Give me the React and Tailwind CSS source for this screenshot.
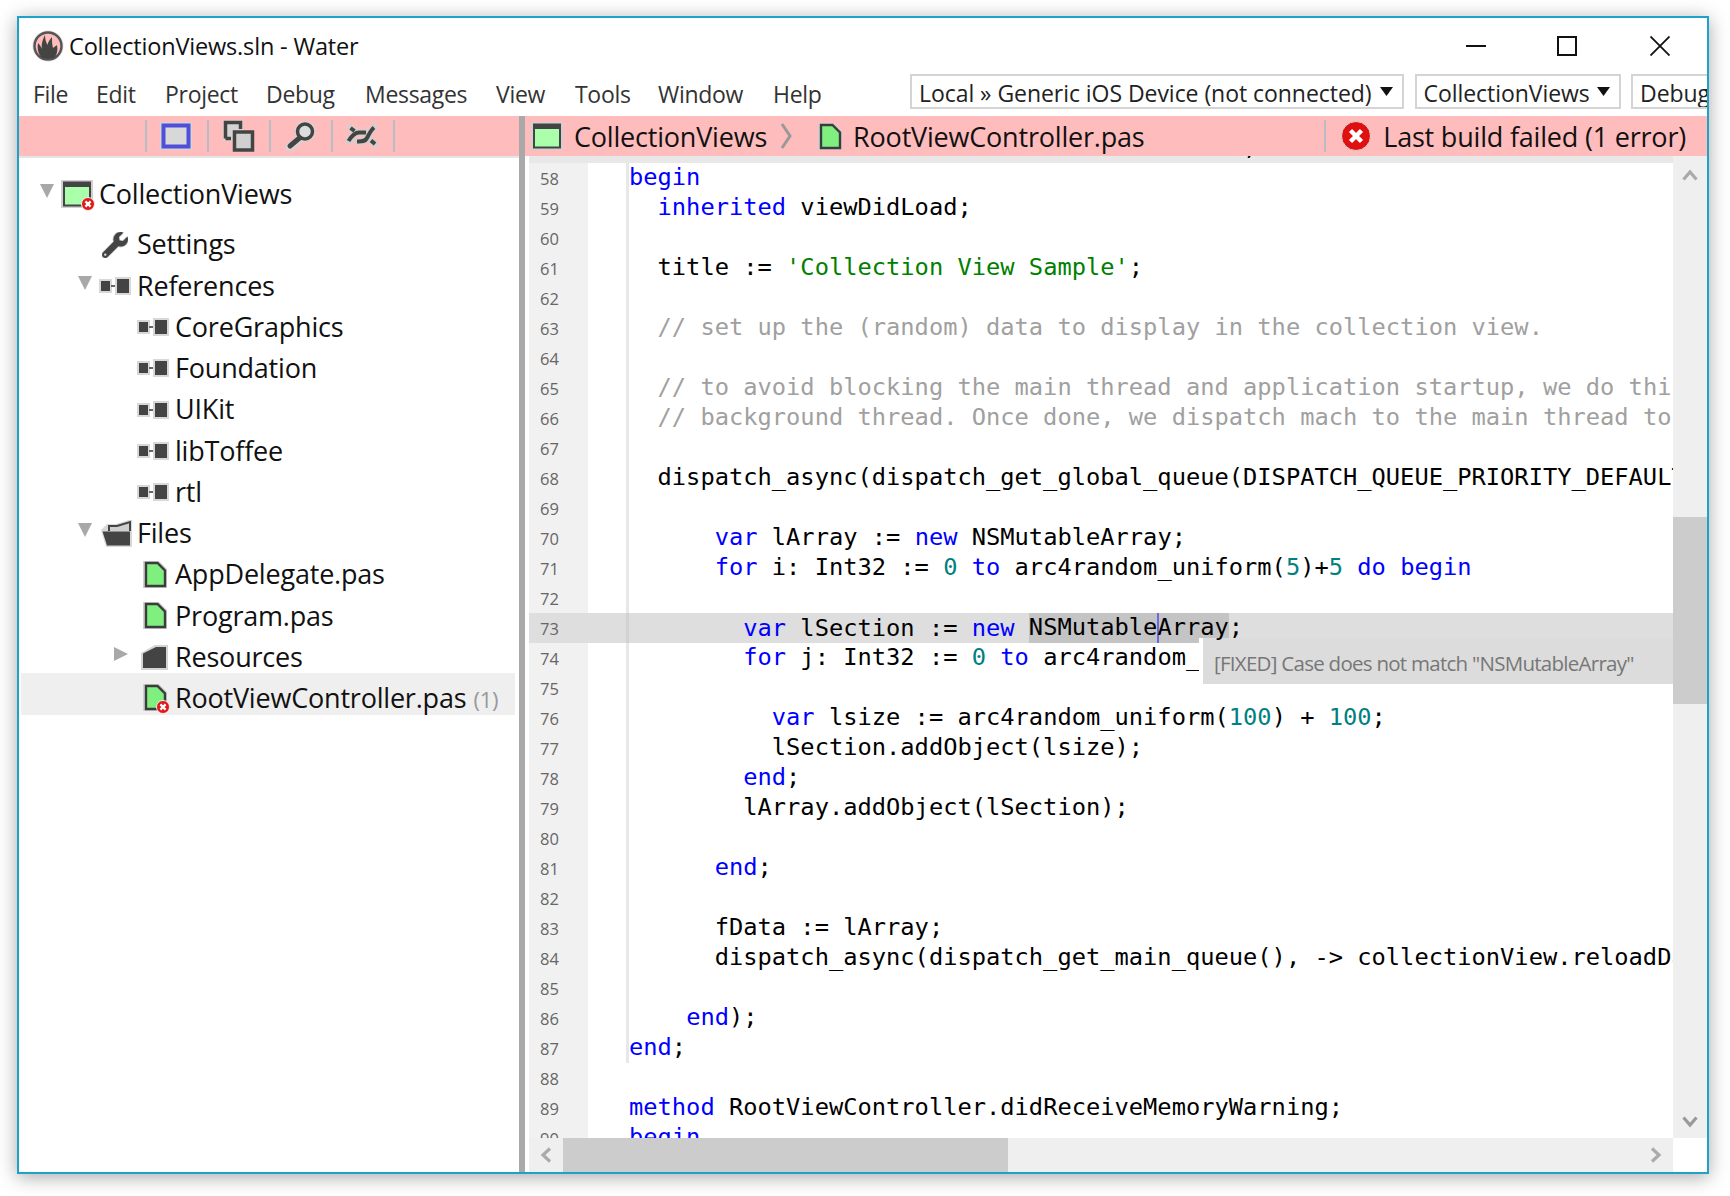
import React from 'react';
import { FaWrench } from 'react-icons/fa';

const K = 'text-[#0000ff]', S = 'text-[#008000]', C = 'text-[#a0a0a0]', N = 'text-[#008080]';
const k = (t) => [t, K], s = (t) => [t, S], c = (t) => [t, C], n = (t) => [t, N];

const LINES = [
  [57, [['      '], k('method'), [' RootViewController.viewDidLoad;']], 'band'],
  [58, [k('begin')], 'block'],
  [59, [['  '], k('inherited'), [' viewDidLoad;']]],
  [60, []],
  [61, [['  title := '], s("'Collection View Sample'"), [';']]],
  [62, []],
  [63, [['  '], c('// set up the (random) data to display in the collection view.')]],
  [64, []],
  [65, [['  '], c('// to avoid blocking the main thread and application startup, we do this on a')]],
  [66, [['  '], c('// background thread. Once done, we dispatch mach to the main thread to update')]],
  [67, []],
  [68, [['  dispatch_async(dispatch_get_global_queue(DISPATCH_QUEUE_PRIORITY_DEFAULT, 0), method begin']]],
  [69, []],
  [70, [['      '], k('var'), [' lArray := '], k('new'), [' NSMutableArray;']]],
  [71, [['      '], k('for'), [' i: Int32 := '], n('0'), [' '], k('to'), [' arc4random_uniform('], n('5'), [')+'], n('5'), [' '], k('do'), [' '], k('begin')]],
  [72, []],
  [73, 'current', 'current'],
  [74, [['        '], k('for'), [' j: Int32 := '], n('0'), [' '], k('to'), [' arc4random_uniform(10)+10 '], k('do'), [' '], k('begin')]],
  [75, []],
  [76, [['          '], k('var'), [' lsize := arc4random_uniform('], n('100'), [') + '], n('100'), [';']]],
  [77, [['          lSection.addObject(lsize);']]],
  [78, [['        '], k('end'), [';']]],
  [79, [['        lArray.addObject(lSection);']]],
  [80, []],
  [81, [['      '], k('end'), [';']]],
  [82, []],
  [83, [['      fData := lArray;']]],
  [84, [['      dispatch_async(dispatch_get_main_queue(), -> collectionView.reloadData);']]],
  [85, []],
  [86, [['    '], k('end'), [');']]],
  [87, [k('end'), [';']], 'blockEnd'],
  [88, [], 'plain'],
  [89, [k('method'), [' RootViewController.didReceiveMemoryWarning;']], 'plain'],
  [90, [k('begin')], 'plain'],
];

function CodeRow({ num, tokens, kind }) {
  const rowBg = kind === 'current' ? 'bg-[#dedede]' : kind === 'band' ? 'bg-[#e8e8e8]' : '';
  const gutter = kind === 'current' || kind === 'band' ? '' : 'bg-[#f1f1f1]';
  const fold =
    kind === 'plain' || kind === 'band' ? '' : kind === 'current' ? 'bg-[#d2d2d2]' : 'bg-[#e8e8e8]';
  const blockBg = kind === 'block' || kind === 'blockEnd';
  return (
    <div className={`flex h-[30px] shrink-0 items-center whitespace-pre ${rowBg}`}>
      <div className={`flex h-[30px] w-[59px] shrink-0 items-center pt-[2px] pl-[11px] text-[16.5px] text-[#666666] ${gutter}`}>
        {kind === 'band' ? '' : num}
      </div>
      <div className="w-[38px] shrink-0" />
      <div className={`h-[30px] w-[3px] shrink-0 ${fold}`} />
      <div className="text-[23.72px] leading-[30px] text-black [font-family:'DejaVu_Sans_Mono',monospace]">
        {tokens === 'current' ? (
          <>
            <span>{'        '}</span>
            <span className={K}>var</span>
            <span> lSection := </span>
            <span className={K}>new</span>
            <span> </span>
            <span className="relative inline-block h-[30px] bg-[#c4c4c4]">
              <span className="relative top-[-1px]">NSMutable</span>
              <span className="absolute top-0 h-[30px] w-[2px] bg-[#6a6ae0]" />
              <span className="relative top-[-1px] z-10">Array</span>
            </span>
            <span className="relative top-[-1px]">;</span>
          </>
        ) : (
          tokens.map((t, i) => (
            <span key={i} className={`relative top-[-1px] ${t[1] || ''} ${blockBg && t[1] ? 'inline-block h-[30px] shadow-none' : ''}`}>
              {t[0]}
            </span>
          ))
        )}
      </div>
    </div>
  );
}

const Sep = () => <div className="h-[32px] w-[2px] bg-[#b8bcc4]" />;

function BlueRect() {
  return (
    <svg width="32" height="28" viewBox="0 0 32 28" className="-ml-[2px]">
      <rect x="0" y="0" width="32" height="28" fill="#d4d4d4" />
      <rect x="3.5" y="3.5" width="25" height="21" fill="#d8d8d8" stroke="#4f4fdc" strokeWidth="4" />
    </svg>
  );
}
function WindowsIcon() {
  return (
    <svg width="32" height="32" viewBox="0 0 32 32">
      <path d="M0 0H20V11H31V32H10V21H0Z" fill="#d4d4d4" />
      <path d="M2.5 18.5V2.5H17.5V9M2.5 18.5H8" fill="none" stroke="#444" strokeWidth="3.5" />
      <rect x="11.5" y="12" width="18" height="18" fill="#d0d0d0" stroke="#444" strokeWidth="3.5" />
    </svg>
  );
}
function SearchIcon() {
  return (
    <svg width="30" height="30" viewBox="0 0 30 30">
      <path d="M14 18L3.5 26" stroke="#d4d4d4" strokeWidth="8" strokeLinecap="round" />
      <circle cx="19" cy="10.5" r="9" fill="#d8d8d8" stroke="#d4d4d4" strokeWidth="3" />
      <circle cx="19" cy="10.5" r="7.5" fill="#dcdcdc" stroke="#444" strokeWidth="3.5" />
      <path d="M13.5 17L4 25" stroke="#444" strokeWidth="5" strokeLinecap="round" />
    </svg>
  );
}
const TANGLE = [
  'M7.5 24C10 20 13 15.5 18 15.5C22 15.5 24 15.5 25 15.5',
  'M16 24.5C20 24.5 24 25 26 21C28 17 30 13 33 10.5',
  'M9.5 11L13.5 14',
  'M30 23.5L34 27',
];
function TangleIcon() {
  return (
    <svg width="32" height="26" viewBox="5 6 32 26" className="-ml-[2px]">
      <g fill="none" stroke="#d0d0d0" strokeWidth="6.5" strokeLinecap="round">
        {TANGLE.map((d) => <path key={d} d={d} />)}
      </g>
      <g fill="none" stroke="#444" strokeWidth="4">
        {TANGLE.map((d) => <path key={d} d={d} />)}
      </g>
    </svg>
  );
}
function ErrorBadge({ size = 13 }) {
  return (
    <svg width={size} height={size} viewBox="0 0 14 14" className="block">
      <circle cx="7" cy="7" r="6.5" fill="#e01818" stroke="#eeeeee" strokeWidth="1" />
      <path d="M4.4 4.4L9.6 9.6M9.6 4.4L4.4 9.6" stroke="#fff" strokeWidth="2.2" />
    </svg>
  );
}
function AppIcon({ badge }) {
  return (
    <span className="relative block h-[28px] w-[32px]">
      <svg width="32" height="28" viewBox="0 0 32 28" className="block">
        <rect width="32" height="28" fill="#d0d0d0" />
        <rect x="3" y="2.5" width="26" height="23" fill="#aaffaa" stroke="#444" strokeWidth="2" />
        <rect x="2" y="2" width="28" height="5" fill="#444" />
      </svg>
      {badge && (
        <span className="absolute right-[-2px] bottom-[-3px]">
          <ErrorBadge size={14} />
        </span>
      )}
    </span>
  );
}
function FileIcon({ badge }) {
  return (
    <span className="relative block h-[27px] w-[24px]">
      <svg width="24" height="27" viewBox="0 0 24 27" className="block">
        <path d="M0 0H16L24 8V27H0Z" fill="#d0d0d0" />
        <path d="M3 2H14.5L22 9.5V25H3Z" fill="#7ff07f" stroke="#3c3c3c" strokeWidth="2.4" />
      </svg>
      {badge && (
        <span className="absolute right-[-3px] bottom-[-3px]">
          <ErrorBadge size={14} />
        </span>
      )}
    </span>
  );
}
function RefIcon() {
  return (
    <svg width="32" height="18" viewBox="0 0 32 18" className="block">
      <rect x="0" y="2" width="13" height="14" fill="#d8d8d8" />
      <rect x="16" y="0" width="16" height="18" fill="#d8d8d8" />
      <rect x="2" y="4" width="9" height="10" fill="#444" />
      <rect x="12" y="8" width="4" height="2" fill="#666" />
      <rect x="18" y="2" width="12" height="14" fill="#444" />
    </svg>
  );
}
function FolderOpenIcon() {
  return (
    <svg width="31" height="27" viewBox="0 0 31 27" className="ml-[2px] block">
      <path d="M0 10L6 4H15L28 0H31V27H5Z" fill="#d8d8d8" />
      <path d="M8 11V6H16L29 2V11" fill="#cfcfcf" stroke="#444" strokeWidth="2" />
      <path d="M1.5 11.5H29V25.5H6Z" fill="#444" />
    </svg>
  );
}
function FolderIcon() {
  return (
    <svg width="27" height="25" viewBox="0 0 27 25" className="block">
      <path d="M0 8L14 0H27V25H0Z" fill="#d4d4d4" />
      <path d="M2 8.5L15 2H25V23H2Z" fill="#444" />
    </svg>
  );
}
const ArrowDown = () => (
  <svg width="14" height="14" viewBox="0 0 14 14" className="block">
    <path d="M0 0H14L7 14Z" fill="#a8a8a8" />
  </svg>
);
const ArrowRight = () => (
  <svg width="14" height="14" viewBox="0 0 14 14" className="-ml-[2px] block">
    <path d="M0 0L14 7L0 14Z" fill="#a8a8a8" />
  </svg>
);

const LEVEL = ['pl-[21px]', 'pl-[59px]', 'pl-[97px]'];

function TreeRow({ level, arrow, icon, iconClass = '', label, extra, selected, first }) {
  const box = selected
    ? 'relative mt-[-5px] ml-[2px] mr-[4px] box-border h-[42px] bg-[#efefef] pt-[8px] !pl-[95px]'
    : first
      ? 'mb-[9px] h-[42px]'
      : 'h-[41.25px]';
  return (
    <div className={`flex items-center ${LEVEL[level]} ${box}`}>
      <span className="flex w-[21px] shrink-0 -translate-y-[3px] items-center">
        {arrow === 'down' && <ArrowDown />}
        {arrow === 'right' && <ArrowRight />}
      </span>
      <span className={`flex h-[30px] w-[38px] shrink-0 items-center ${iconClass}`}>{icon}</span>
      <span className="text-[27px] tracking-[-0.2px] whitespace-nowrap text-[#111]">
        {label}
        {extra && <span className="ml-[7px] text-[22px] text-[#999]">{extra}</span>}
      </span>
    </div>
  );
}

function Combo({ width, label, noArrow }) {
  return (
    <div className={`flex h-[35px] shrink-0 items-center overflow-hidden border-2 border-[#d4d4d4] pt-[4px] pl-[7px] ${width}`}>
      <span className="text-[23px] tracking-[-0.05px] whitespace-nowrap text-[#222]">{label}</span>
      {!noArrow && (
        <svg width="13" height="9" viewBox="0 0 13 9" className="mt-[-5px] ml-auto mr-[9px] shrink-0">
          <path d="M0 0H13L6.5 9Z" fill="#111" />
        </svg>
      )}
    </div>
  );
}

const MENU = [
  ['File', 'w-[63px]'],
  ['Edit', 'w-[69px]'],
  ['Project', 'w-[101px]'],
  ['Debug', 'w-[99px]'],
  ['Messages', 'w-[131px]'],
  ['View', 'w-[79px]'],
  ['Tools', 'w-[83px]'],
  ['Window', 'w-[115px]'],
  ['Help', 'w-[137px]'],
];

const BAR_TEXT = 'pt-[3px] text-[27px] tracking-[-0.2px] whitespace-nowrap text-[#111]';

export default function App() {
  return (
    <div className="h-[1196px] w-[1730px] overflow-hidden bg-white pt-[16px] pl-[17px] [font-family:'Open_Sans',sans-serif]">
      <div className="relative flex h-[1158px] w-[1692px] flex-col overflow-hidden border-2 border-[#1fa2c9] bg-white shadow-[0_3px_18px_rgba(0,0,0,0.35)]">
        {/* title bar */}
        <div className="flex h-[56px] shrink-0 items-center pl-[13px]">
          <svg width="32" height="32" viewBox="0 0 32 32" className="mr-[5px] shrink-0">
            <circle cx="16" cy="16" r="15.5" fill="#dcdcdc" />
            <circle cx="16" cy="16" r="13.5" fill="#ffbcbc" stroke="#555" strokeWidth="2.4" />
            <path
              d="M9 27C6 23 5 18 6 13C8 15 9 17 10 19C9 14 11 9 13 5C13 9 14 12 15.5 15C16 12 18 9 20 7C20 11 20 14 21 18C22 17 24 16 25 15C26 20 25 24 23 27C20 29.5 12 29.5 9 27Z"
              fill="#444"
            />
          </svg>
          <span className="pt-[2px] text-[23.5px] tracking-[-0.17px] whitespace-pre text-[#111]">CollectionViews.sln - Water</span>
          <div className="ml-auto flex items-center">
            <div className="mr-[71px] h-[2px] w-[20px] bg-[#111]" />
            <div className="mr-[73px] h-[20px] w-[20px] border-2 border-[#111]" />
            <svg width="20" height="20" viewBox="0 0 20 20" className="mr-[37px]">
              <path d="M0.5 0.5L19.5 19.5M19.5 0.5L0.5 19.5" stroke="#111" strokeWidth="1.8" />
            </svg>
          </div>
        </div>

        {/* menu bar */}
        <div className="flex h-[42px] shrink-0 pl-[14px]">
          <div className="flex h-[40px] shrink-0 items-center">
            {MENU.map(([m, w]) => (
              <span key={m} className={`text-[23px] tracking-[-0.3px] text-[#333] ${w}`}>
                {m}
              </span>
            ))}
          </div>
          <div className="flex gap-[10.5px]">
            <Combo width="w-[494px]" label="Local » Generic iOS Device (not connected)" />
            <Combo width="w-[206px]" label="CollectionViews" />
            <Combo width="w-[90px]" label="Debug" noArrow />
          </div>
        </div>

        {/* body */}
        <div className="flex min-h-0 flex-1">
          {/* left pane */}
          <div className="flex w-[500px] shrink-0 flex-col">
            <div className="flex h-[40px] shrink-0 items-center bg-[#ffbcbc] pl-[126px]">
              <Sep />
              <div className="flex w-[60px] justify-center"><BlueRect /></div>
              <Sep />
              <div className="flex w-[60px] justify-center"><WindowsIcon /></div>
              <Sep />
              <div className="flex w-[60px] justify-center"><SearchIcon /></div>
              <Sep />
              <div className="flex w-[60px] justify-center"><TangleIcon /></div>
              <Sep />
            </div>
            <div className="h-[2px] shrink-0 bg-[#e5e5e5]" />
            <div className="flex-1 pt-[15px]">
              <TreeRow first level={0} arrow="down" icon={<AppIcon badge />} label="CollectionViews" />
              <TreeRow level={1} icon={<FaWrench className="ml-[3px] text-[26px] text-[#444] [stroke:#d0d0d0] [stroke-width:30px] [paint-order:stroke]" />} label="Settings" />
              <TreeRow level={1} arrow="down" icon={<RefIcon />} label="References" />
              <TreeRow level={2} icon={<RefIcon />} label="CoreGraphics" />
              <TreeRow level={2} icon={<RefIcon />} label="Foundation" />
              <TreeRow level={2} icon={<RefIcon />} label="UIKit" />
              <TreeRow level={2} icon={<RefIcon />} label="libToffee" />
              <TreeRow level={2} icon={<RefIcon />} label="rtl" />
              <TreeRow level={1} arrow="down" icon={<FolderOpenIcon />} label="Files" />
              <TreeRow level={2} icon={<FileIcon />} iconClass="pl-[6px]" label="AppDelegate.pas" />
              <TreeRow level={2} icon={<FileIcon />} iconClass="pl-[6px]" label="Program.pas" />
              <TreeRow level={2} arrow="right" icon={<FolderIcon />} iconClass="pl-[4px]" label="Resources" />
              <TreeRow selected level={2} icon={<FileIcon badge />} iconClass="pl-[6px]" label="RootViewController.pas" extra="(1)" />
            </div>
          </div>

          {/* splitter */}
          <div className="w-[6px] shrink-0 bg-[#a9a9a9]" />

          {/* editor pane */}
          <div className="flex min-w-0 flex-1 flex-col">
            <div className="flex h-[40px] shrink-0 items-center bg-[#ffbcbc] pl-[6px]">
              <AppIcon />
              <span className={`ml-[11px] ${BAR_TEXT}`}>CollectionViews</span>
              <svg width="12" height="26" viewBox="0 0 12 26" className="ml-[13px]">
                <path d="M2 1L10 13L2 25" fill="none" stroke="#999" strokeWidth="3" />
              </svg>
              <span className="ml-[26px]"><FileIcon /></span>
              <span className={`ml-[11px] ${BAR_TEXT}`}>RootViewController.pas</span>
              <div className="ml-auto h-[32px] w-[2px] bg-[#b8bcc4]" />
              <svg width="30" height="30" viewBox="0 0 30 30" className="ml-[15px]">
                <circle cx="15" cy="15" r="14.5" fill="#e01010" stroke="#d8d8d8" strokeWidth="1" />
                <path d="M9.5 9.5L20.5 20.5M20.5 9.5L9.5 20.5" stroke="#fff" strokeWidth="4.5" />
              </svg>
              <span className={`mr-[21px] ml-[12px] ${BAR_TEXT}`}>Last build failed (1 error)</span>
            </div>
            <div className="flex min-h-0 flex-1">
              <div className="relative min-w-0 flex-1 overflow-hidden pl-[4px]">
                <div className="mt-[-23px] flex flex-col">
                  {LINES.map(([num, tokens, kind]) => (
                    <CodeRow key={num} num={num} tokens={tokens} kind={kind} />
                  ))}
                </div>
                <div className="absolute top-[482px] left-[674px] flex h-[46px] w-[474px] items-center border-l-[4px] border-white bg-[#dcdcdc] pt-[5px] pl-[11px] text-[20.5px] tracking-[-0.73px] whitespace-pre text-[#777]">
                  [FIXED] Case does not match "NSMutableArray"
                </div>
              </div>
              <div className="flex w-[34px] shrink-0 flex-col bg-[#efefef]">
                <div className="flex h-[38px] shrink-0 items-center justify-center">
                  <svg width="16" height="12" viewBox="0 0 16 12">
                    <path d="M1.5 10.5L8 3L14.5 10.5" fill="none" stroke="#aaa" strokeWidth="3.2" />
                  </svg>
                </div>
                <div className="mt-[323px] h-[187px] shrink-0 bg-[#cccccc]" />
                <div className="flex-1" />
                <div className="flex h-[32px] shrink-0 items-center justify-center">
                  <svg width="16" height="12" viewBox="0 0 16 12">
                    <path d="M1.5 1.5L8 9L14.5 1.5" fill="none" stroke="#999" strokeWidth="3.2" />
                  </svg>
                </div>
              </div>
            </div>
            <div className="flex h-[34px] shrink-0 pl-[4px]">
              <div className="flex min-w-0 flex-1 bg-[#efefef]">
                <div className="flex w-[34px] shrink-0 items-center justify-center">
                  <svg width="12" height="16" viewBox="0 0 12 16">
                    <path d="M10 1.5L3 8L10 14.5" fill="none" stroke="#aaa" strokeWidth="3.2" />
                  </svg>
                </div>
                <div className="w-[445px] shrink-0 bg-[#cccccc]" />
                <div className="flex flex-1 items-center justify-end pr-[11px]">
                  <svg width="12" height="16" viewBox="0 0 12 16">
                    <path d="M2 1.5L9 8L2 14.5" fill="none" stroke="#aaa" strokeWidth="3.2" />
                  </svg>
                </div>
              </div>
              <div className="w-[34px] shrink-0 bg-white" />
            </div>
          </div>
        </div>
      </div>
    </div>
  );
}
